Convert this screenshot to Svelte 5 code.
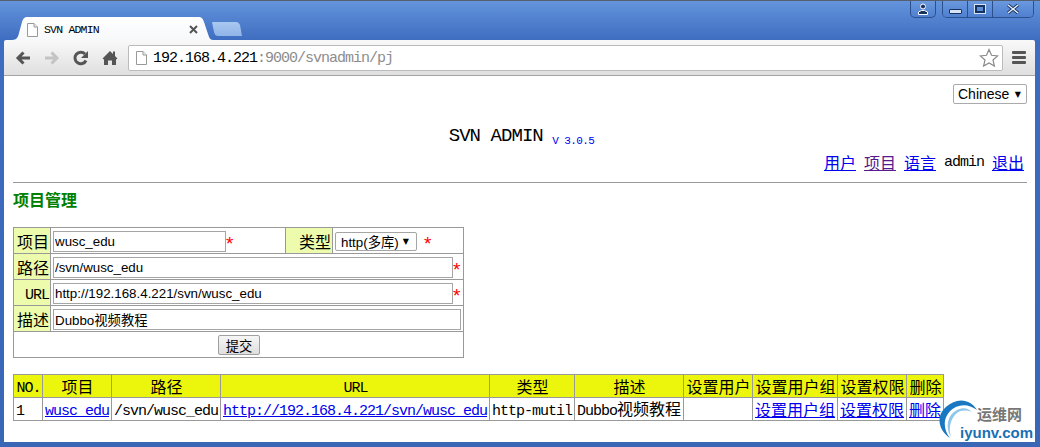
<script>
  const headers = ['项目', '路径', 'URL', '类型', '描述', '设置用户', '设置用户组', '设置权限', '删除'];
  const widths = [29, 69, 109, 269, 85, 109, 69, 85, 69, 37];
</script>

<div class="window">
  <div class="titlebar">
    <div class="tab">
      <svg class="page-icon" width="11" height="14" viewBox="0 0 11 14"><path d="M.5.5h6.5l3.500 3.500v9.500h-10z" fill="#fff" stroke="#999"/><path d="M7 .5v3.500h3.500" fill="#eee" stroke="#999"/></svg>
      <span class="tab-title">SVN ADMIN</span>
      <svg class="tab-close" width="9" height="9" viewBox="0 0 9 9"><path d="M1 1l7 7M8 1l-7 7" stroke="#555" stroke-width="2"/></svg>
    </div>
    <div class="newtab"></div>
    <div class="winbtns">
      <div class="winbtn profile">
        <svg width="12" height="12" viewBox="0 0 12 12"><circle cx="6" cy="3.500" r="2.500" fill="#16325f" stroke="#fff"/><path d="M1.500 11.500v-2.500l3-1.500h3l3 1.500v2.500z" fill="#16325f" stroke="#fff"/></svg>
      </div>
      <div class="group">
        <div class="winbtn min"><span class="min-bar"></span></div>
        <div class="winbtn max"><span class="max-box"></span></div>
        <div class="winbtn close">
          <svg width="14" height="10" viewBox="0 0 14 10"><path d="M2 1l10 8M12 1l-10 8" stroke="#16325f" stroke-width="3.200"/><path d="M2 1l10 8M12 1l-10 8" stroke="#e8eef8" stroke-width="1.400"/></svg>
        </div>
      </div>
    </div>
  </div>

  <div class="toolbar">
    <svg class="nav" width="16" height="16" viewBox="0 0 16 16"><path d="M15 8H4M8.500 2.500L3 8l5.500 5.500" fill="none" stroke="#555" stroke-width="3"/></svg>
    <svg class="nav" width="16" height="16" viewBox="0 0 16 16"><path d="M1 8h11M7.500 2.500L13 8l-5.500 5.500" fill="none" stroke="#c4c4c4" stroke-width="3"/></svg>
    <svg class="nav" width="16" height="16" viewBox="0 0 16 16"><path d="M13 10.500A5.800 5.800 0 1 1 12 4" fill="none" stroke="#555" stroke-width="3"/><path d="M15 1v7h-7z" fill="#555"/></svg>
    <svg class="nav" width="16" height="16" viewBox="0 0 16 16"><path d="M8 1L0.500 8.500 2 9.500V15h4v-4.500h4V15h4V9.500l1.500-1L13 6V1.500h-2v2.500z" fill="#555"/></svg>
    <div class="omnibox">
      <svg width="11" height="14" viewBox="0 0 11 14"><path d="M.5.5h6.500l3.500 3.500v9.500h-10z" fill="#fff" stroke="#999"/><path d="M7 .5v3.500h3.500" fill="#eee" stroke="#999"/></svg>
      <span class="url">192.168.4.221<span class="url-rest">:9000/svnadmin/pj</span></span>
      <svg class="star" width="20" height="20" viewBox="0 0 20 20"><path d="M10 1.500l2.500 5.800 6.200.6-4.700 4.100 1.400 6.100L10 15l-5.400 3.100L6 12 1.300 7.900l6.200-.6z" fill="#fff" stroke="#8a8a8a" stroke-width="1.200"/></svg>
    </div>
    <div class="menu"><span></span><span></span><span></span></div>
  </div>

  <main class="page">
    <div class="lang-row">
      <div class="lang">Chinese<span class="arrow">▼</span></div>
    </div>

    <h1 class="title">SVN ADMIN <span class="version">V 3.0.5</span></h1>

    <nav class="links">
      <a href="#u">用户</a>
      <a href="#p" class="visited">项目</a>
      <a href="#l">语言</a>
      <span class="lat">admin</span>
      <a href="#o">退出</a>
    </nav>

    <hr />
    <h2 class="section">项目管理</h2>

    <table class="form">
      <colgroup><col style="width:37px" /><col style="width:235px" /><col style="width:47px" /><col style="width:131px" /></colgroup>
      <tbody>
        <tr>
          <th>项目</th>
          <td><input class="short" value="wusc_edu" /><span class="req">*</span></td>
          <th>类型</th>
          <td><div class="pick">http(多库)<span class="arrow">▼</span></div><span class="req gap">*</span></td>
        </tr>
        <tr>
          <th>路径</th>
          <td colspan="3"><input class="long" value="/svn/wusc_edu" /><span class="req">*</span></td>
        </tr>
        <tr>
          <th><span class="lat">URL</span></th>
          <td colspan="3"><input class="long" value="http://192.168.4.221/svn/wusc_edu" /><span class="req">*</span></td>
        </tr>
        <tr>
          <th>描述</th>
          <td colspan="3"><input class="full" value="Dubbo视频教程" /></td>
        </tr>
        <tr>
          <td colspan="4" class="submit"><button>提交</button></td>
        </tr>
      </tbody>
    </table>

    <table class="list">
      <colgroup>
        {#each widths as w}<col style="width:{w}px" />{/each}
      </colgroup>
      <thead>
        <tr>
          <th><span class="lat">NO.</span></th>
          {#each headers as h}
            <th>{#if h === 'URL'}<span class="lat">{h}</span>{:else}{h}{/if}</th>
          {/each}
        </tr>
      </thead>
      <tbody>
        <tr>
          <td><span class="lat">1</span></td>
          <td><a href="#p" class="lat">wusc_edu</a></td>
          <td><span class="lat">/svn/wusc_edu</span></td>
          <td><a href="#r" class="lat">http://192.168.4.221/svn/wusc_edu</a></td>
          <td><span class="lat">http-mutil</span></td>
          <td><span class="lat">Dubbo</span>视频教程</td>
          <td></td>
          <td><a href="#g">设置用户组</a></td>
          <td><a href="#a">设置权限</a></td>
          <td><a href="#d">删除</a></td>
        </tr>
      </tbody>
    </table>

    <div class="watermark">
      <svg width="42" height="40" viewBox="0 0 42 40">
        <path d="M13 38C-2 28-2 8 20 1 28-1 36 3 40 10 32 4 24 4 17 8 6 15 5 28 13 38z" fill="#1a78c2"/>
        <path d="M14 37C8 28 10 15 20 10c6-3 11-2 15 2-6-2-11-2-15 1-6 5-9 14-6 24z" fill="#8fc6ea"/>
      </svg>
      <span class="wm-zh">运维网</span>
      <span class="wm-en">iyunv.com</span>
    </div>
  </main>
</div>

<style>
  :global(body) {
    margin: 0;
    background: #fff;
  }

  .window {
    width: 1040px;
    height: 447px;
    box-sizing: border-box;
    display: flex;
    flex-direction: column;
    padding: 0 5px 5px 4px;
    overflow: hidden;
    border-top: 1px solid #555f6e;
    background: linear-gradient(#6394dc 0, #3e6cc0 40px, #3a66b6 100%);
    font-family: "Noto Sans CJK SC", sans-serif;
    font-size: 16px;
    color: #000;
  }

  .titlebar {
    height: 39px;
    flex: none;
    display: flex;
    align-items: flex-end;
    padding-left: 8px;
  }

  .tab {
    width: 201px;
    height: 23px;
    box-sizing: border-box;
    padding: 2px 0 0 15px;
    display: flex;
    align-items: center;
    gap: 6px;
    background: linear-gradient(#fff, #f7f8fa);
    clip-path: path('M0 23C5 23 6 20 7 16L10 5C11 2 12 0 16 0H186C190 0 191 2 192 5L196 17C197 20 198 23 201 23Z');
  }

  .tab-title {
    flex: 1;
    font: 11.500px "Liberation Mono", monospace;
    letter-spacing: -0.800px;
  }

  .tab-close {
    margin-right: 15px;
  }

  .newtab {
    width: 30px;
    height: 14px;
    margin: 0 0 4px -1px;
    background: linear-gradient(#a9c8f0, #8fb4e8);
    clip-path: path('M0 0H24C26 0 27 1 28 3L30 14H6C4 14 3 13 2 10Z');
  }

  .winbtns {
    margin-left: auto;
    align-self: flex-start;
    display: flex;
    gap: 6px;
    margin-top: -1px;
    margin-right: 1px;
  }

  .group {
    display: flex;
    border: 1px solid #2c4f8e;
    border-top: none;
    border-radius: 0 0 5px 5px;
    overflow: hidden;
  }

  .winbtn {
    height: 17px;
    display: flex;
    align-items: center;
    justify-content: center;
    background: linear-gradient(#6c9ae0, #4f80cf);
  }

  .profile {
    width: 24px;
    border: 1px solid #2c4f8e;
    border-top: none;
    border-radius: 0 0 5px 5px;
  }

  .min,
  .max {
    width: 24px;
    border-right: 1px solid #2c4f8e;
  }

  .close {
    width: 40px;
  }

  .min-bar {
    width: 11px;
    height: 3px;
    margin-top: 6px;
    background: #d6e2f5;
    border: 1px solid #16325f;
    border-radius: 1px;
  }

  .max-box {
    width: 6px;
    height: 4px;
    border: 2px solid #16325f;
    outline: 1px solid #d6e2f5;
  }

  .toolbar {
    height: 36px;
    flex: none;
    box-sizing: border-box;
    display: flex;
    align-items: center;
    padding: 0 9px 0 11px;
    gap: 13px;
    background: linear-gradient(#f9f9f9, #dfdfdf);
    border-bottom: 1px solid #a5a5a5;
    border-radius: 2px 2px 0 0;
  }

  .nav {
    flex: none;
  }

  .omnibox {
    flex: 1;
    height: 26px;
    box-sizing: border-box;
    margin-left: -3px;
    display: flex;
    align-items: center;
    gap: 6px;
    padding: 0 3px 0 7px;
    background: #fff;
    border: 1px solid #bbb;
    border-radius: 2px;
  }

  .url {
    flex: 1;
    padding-top: 2px;
    font: 15px "Liberation Mono", monospace;
    letter-spacing: -1px;
    color: #000;
  }

  .url-rest {
    color: #8c8c8c;
  }

  .menu {
    width: 14px;
    display: flex;
    flex-direction: column;
    gap: 2px;
    margin-left: -4px;
  }

  .menu span {
    height: 3px;
    background: #555;
    border-radius: 1px;
  }

  .page {
    flex: 1;
    position: relative;
    background: #fff;
    padding: 8px 8px 0 9px;
  }

  .lang-row {
    display: flex;
    justify-content: flex-end;
  }

  .lang {
    width: 74px;
    height: 20px;
    box-sizing: border-box;
    display: flex;
    align-items: center;
    justify-content: space-between;
    padding: 0 5px 0 4px;
    border: 1px solid #aaa;
    border-radius: 2px;
    font: 14px "Liberation Sans", sans-serif;
  }

  .arrow {
    font: 8px "DejaVu Sans", sans-serif;
  }

  .title {
    margin: 20px 0 0;
    height: 24px;
    padding-left: 3px;
    text-align: center;
    font: 19px/24px "Liberation Mono", monospace;
    letter-spacing: -0.950px;
  }

  .version {
    margin-left: -1px;
    font-size: 11px;
    font-weight: normal;
    letter-spacing: -0.600px;
    color: #0000ee;
    vertical-align: -3px;
  }

  .links {
    display: flex;
    justify-content: flex-end;
    align-items: center;
    gap: 8px;
    height: 22px;
    margin: 3px 3px 0 0;
  }

  a {
    color: #0000ee;
    text-decoration: underline;
  }

  a.visited {
    color: #551a8b;
  }

  .lat {
    font: 15px "Liberation Mono", monospace;
    letter-spacing: -1px;
  }

  hr {
    margin: 9px 0 0;
    border: none;
    border-top: 1px solid #999;
    height: 0;
  }

  .section {
    margin: 5px 0 17px;
    font-size: 16px;
    line-height: 22px;
    font-weight: bold;
    color: #008000;
  }

  table {
    border-collapse: collapse;
    table-layout: fixed;
  }

  .form {
    width: 450px;
    font-size: 16px;
  }

  .form th,
  .form td {
    height: 25px;
    padding: 0 1px 0 2px;
    border: 1px solid #999;
    font-weight: normal;
    line-height: 20px;
    white-space: nowrap;
  }

  .form th {
    background: #ecfcac;
    text-align: right;
  }

  input {
    box-sizing: border-box;
    height: 21px;
    padding: 0 1px;
    border: 1px solid #a5a5a5;
    font: 13.330px "Liberation Sans", "Noto Sans CJK SC", sans-serif;
    vertical-align: middle;
  }

  .short {
    width: 173px;
  }

  .long {
    width: 400px;
  }

  .full {
    width: 408px;
  }

  .req {
    display: inline-block;
    width: 7px;
    font: 19px/16px "Liberation Mono", monospace;
    color: #f00;
    vertical-align: -4px;
    text-indent: -2px;
  }

  .gap {
    margin-left: 7px;
  }

  .pick {
    display: inline-flex;
    align-items: center;
    justify-content: space-between;
    width: 82px;
    height: 19px;
    box-sizing: border-box;
    padding: 0 7px 0 5px;
    border: 1px solid #a5a5a5;
    border-radius: 2px;
    font: 13.330px "Liberation Sans", "Noto Sans CJK SC", sans-serif;
    vertical-align: middle;
  }

  .submit {
    text-align: center;
  }

  button {
    width: 42px;
    height: 20px;
    padding: 0;
    border: 1px solid #a0a0a0;
    border-radius: 2px;
    background: linear-gradient(#f6f6f6, #dedede);
    font: 13.330px "Noto Sans CJK SC", sans-serif;
  }

  .list {
    margin-top: 16px;
    width: 930px;
    font-size: 16px;
  }

  .list th,
  .list td {
    padding: 0 1px 0 2px;
    border: 1px solid #999;
    white-space: nowrap;
  }

  .list th {
    height: 21px;
    line-height: 20px;
    font-weight: normal;
    text-align: center;
    background: #ecf60c;
  }

  .list td {
    height: 22px;
    line-height: 20px;
  }

  .watermark {
    position: absolute;
    right: -5px;
    bottom: -5px;
    width: 100px;
    height: 42px;
  }

  .watermark svg {
    position: absolute;
    left: -3px;
    top: -5px;
  }

  .wm-zh {
    position: absolute;
    left: 37px;
    top: 0;
    font-size: 15px;
    line-height: 18px;
    font-weight: bold;
    color: #777;
  }

  .wm-en {
    position: absolute;
    left: 20px;
    top: 20px;
    font: bold 15px/15px "Liberation Sans", sans-serif;
    color: #1a6fb5;
  }
</style>
